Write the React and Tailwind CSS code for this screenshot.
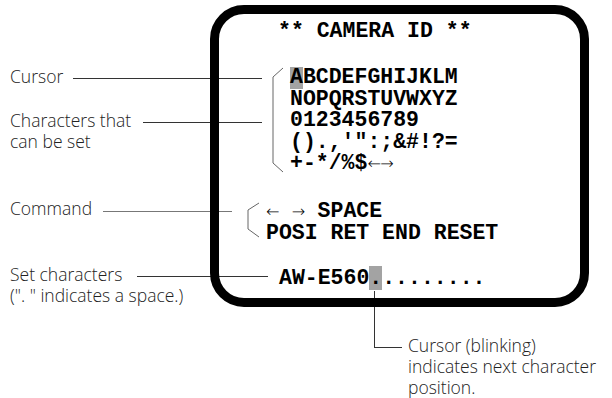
const mono = { fontFamily: '"Liberation Mono", "Courier New", monospace' };

function Arrow({ children }) {
  return (
    <span
      className="inline-block w-[12.9px] text-center font-extralight text-[16px] leading-[21.5px] align-top"
      style={{ fontFamily: '"DejaVu Sans", sans-serif' }}
    >
      {children}
    </span>
  );
}

function Cursor({ children, tall }) {
  return (
    <span className={`inline-block w-[12.9px] bg-[#a3a3a3] text-center align-top ${tall ? 'h-[24px] leading-[24px]' : 'h-[21.5px]'}`}>
      {children}
    </span>
  );
}

function Label({ top, left, children }) {
  return (
    <div
      className="absolute text-[17.5px] leading-[21px] font-light text-[#222] whitespace-nowrap"
      style={{ top, left, fontFamily: '"Open Sans", "Liberation Sans", sans-serif' }}
    >
      {children}
    </div>
  );
}

export default function App() {
  return (
    <div className="relative w-[612px] h-[398px] bg-white overflow-hidden pt-[5px]">
      {/* leader lines */}
      <div className="absolute left-[73px] top-[78px] w-[189px] h-px bg-[#333]" />
      <div className="absolute left-[143px] top-[122px] w-[119px] h-px bg-[#333]" />
      <div className="absolute left-[103px] top-[211px] w-[129px] h-px bg-[#777]" />
      <div className="absolute left-[137px] top-[276px] w-[131px] h-px bg-[#333]" />
      <div className="absolute left-[374px] top-[291px] w-px h-[57px] bg-[#333]" />
      <div className="absolute left-[374px] top-[347px] w-[28px] h-px bg-[#333]" />

      <svg className="absolute left-0 top-0" width="612" height="398">
        <polyline points="283,68 273,77 273,163 283,172" fill="none" stroke="#666" strokeWidth="1" />
        <polyline points="259,203 248,210 248,229 259,237" fill="none" stroke="#666" strokeWidth="1" />
      </svg>

      {/* monitor screen */}
      <div
        className="relative ml-[210px] w-[379px] h-[302px] border-[9px] border-black rounded-[34px] flex flex-col text-[21.5px] leading-[21.5px] font-bold text-black whitespace-pre"
        style={mono}
      >
        <div className="mt-[7px] pl-[59px] h-[21.5px]">** CAMERA ID **</div>

        <div className="mt-[24.5px] pl-[71px] flex flex-col">
          <div className="h-[21.5px]">
            <Cursor>A</Cursor>BCDEFGHIJKLM
          </div>
          <div className="h-[21.5px]">NOPQRSTUVWXYZ</div>
          <div className="h-[21.5px]">0123456789</div>
          <div className="h-[21.5px]">().,'":;&amp;#!?=</div>
          <div className="h-[21.5px]">
            +-*/%$<Arrow>←</Arrow>
            <Arrow>→</Arrow>
          </div>
        </div>

        <div className="mt-[26.5px] pl-[47px] flex flex-col">
          <div className="h-[21.5px]">
            <Arrow>←</Arrow> <Arrow>→</Arrow> SPACE
          </div>
          <div className="h-[21.5px]">POSI RET END RESET</div>
        </div>

        <div className="mt-[22px] pl-[60px] h-[24px] leading-[24px]">
          AW-E560<Cursor tall>.</Cursor>........
        </div>
      </div>

      <Label top={66} left={10}>Cursor</Label>
      <Label top={110} left={10}>
        Characters that
        <br />
        can be set
      </Label>
      <Label top={198} left={10}>Command</Label>
      <Label top={264} left={10}>
        Set characters
        <br />
        (". " indicates a space.)
      </Label>
      <Label top={335} left={408}>
        Cursor (blinking)
        <br />
        indicates next character
        <br />
        position.
      </Label>
    </div>
  );
}
